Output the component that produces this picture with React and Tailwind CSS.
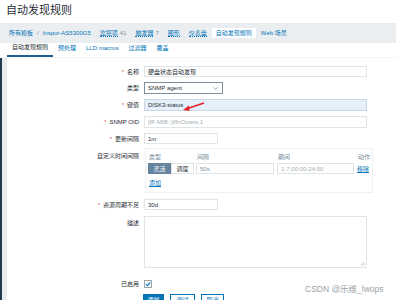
import { ChevronDown } from "lucide-react";

const crumbs = [
  { text: "监控项", num: "41" },
  { text: "触发器", num: "7" },
  { text: "图形" },
  { text: "仪表盘" },
];

function Label({ req, children, className = "" }) {
  return (
    <div className={`w-[132px] shrink-0 text-right text-[6px] leading-none text-[#1f2c33] ${className}`}>
      {req && <span className="mr-[3px] text-[#e45959]">*</span>}
      {children}
    </div>
  );
}

function Field({ className = "", children }) {
  return (
    <div className={`flex items-center border border-[#dfe4e7] bg-white px-[3px] text-[6px] leading-none text-[#1f2c33] ${className}`}>
      {children}
    </div>
  );
}

export default function App() {
  return (
    <div className="relative h-[300px] w-[396px] overflow-hidden bg-white font-['Liberation_Sans','Noto_Sans_CJK_SC',sans-serif]">
      {/* Title */}
      <div className="h-[23px] pl-[6px] pt-[5px] text-[11px] leading-none text-[#1f2c33]">
        自动发现规则
      </div>

      {/* Breadcrumbs */}
      <div className="flex h-[20px] items-center bg-[#ebeef0] pl-[9px] text-[6px] leading-none">
        <span className="text-[#0275b8]">所有模板</span>
        <span className="mx-[4px] text-[#768d99]">/</span>
        <span className="text-[#0275b8]">Inspur-AS5300G5</span>
        {crumbs.map((c) => (
          <span key={c.text} className="ml-[9px] text-[#0275b8]">
            <span className="border-b border-dotted border-[#0275b8]">{c.text}</span>
            {c.num && <span className="ml-[2px] text-[#768d99]">{c.num}</span>}
          </span>
        ))}
        <span className="ml-[5px] bg-white px-[4px] py-[2px] text-[#0275b8]">自动发现规则</span>
        <span className="ml-[5px] text-[#0275b8]">Web 场景</span>
      </div>

      {/* Tabs */}
      <div className="flex h-[15px] items-end border-b border-[#f2f4f5] pl-[7px] text-[6px] leading-none">
        <div className="border-b-2 border-[#1f5f8f] px-[5px] pb-[5px] text-[#1f2c33]">自动发现规则</div>
        <div className="ml-[5px] pb-[6px] text-[#0275b8]">预处理</div>
        <div className="ml-[10px] pb-[6px] text-[#0275b8]">LLD macros</div>
        <div className="ml-[10px] pb-[6px] text-[#0275b8]">过滤器</div>
        <div className="ml-[10px] pb-[6px] text-[#0275b8]">覆盖</div>
      </div>

      {/* Form */}
      <div className="flex h-[242px]">
        <div className="w-[2px] bg-[#1e3a4c]" />
        <div className="w-[5px] bg-[#e8ebed]" />
        <div className="flex flex-1 flex-col pt-[8px]">
          <div className="flex items-center gap-[5px]">
            <Label req>名称</Label>
            <Field className="h-[11px] w-[223px]">硬盘状态自动发现</Field>
          </div>

          <div className="mt-[5px] flex items-center gap-[5px]">
            <Label>类型</Label>
            <div className="flex h-[12px] w-[79px] items-center justify-between border border-[#7b8fa0] bg-white px-[3px] text-[6px] leading-none text-[#1f2c33]">
              SNMP agent
              <ChevronDown size={7} strokeWidth={1.5} className="text-[#1f2c33]" />
            </div>
          </div>

          <div className="mt-[5px] flex items-center gap-[5px]">
            <Label req>键值</Label>
            <div className="flex h-[12px] w-[223px] items-center border border-[#c9d7e2] bg-[#e6f0fa] px-[3px] text-[6px] leading-none text-[#1f2c33]">
              DISK3-status
            </div>
          </div>

          <div className="mt-[5px] flex items-center gap-[5px]">
            <Label req>SNMP OID</Label>
            <Field className="h-[12px] w-[223px] text-[#a3adb3]">[IF-MIB::]ifInOctets.1</Field>
          </div>

          <div className="mt-[5px] flex items-center gap-[5px]">
            <Label req>更新间隔</Label>
            <Field className="h-[11px] w-[74px]">1m</Field>
          </div>

          <div className="mt-[4px] flex items-start gap-[6px]">
            <Label className="mt-[5px]">自定义时间间隔</Label>
            <div className="flex h-[45px] w-[228px] flex-col border border-[#eef0f1] pl-[2px] pt-[5px] text-[6px] leading-none">
              <div className="grid grid-cols-[48px_81px_80px_1fr] pl-[1px] text-[#768d99]">
                <span>类型</span>
                <span>间隔</span>
                <span>期间</span>
                <span>动作</span>
              </div>
              <div className="mt-[3px] grid grid-cols-[48px_81px_80px_1fr] items-center">
                <div className="flex h-[11px]">
                  <div className="flex w-[23px] items-center justify-center bg-[#6684a0] text-white">灵活</div>
                  <div className="flex w-[23px] items-center justify-center border border-[#dfe4e7] text-[#1f2c33]">调度</div>
                </div>
                <Field className="h-[11px] w-[78px] text-[#768d99]">50s</Field>
                <Field className="h-[11px] w-[77px] text-[#a3adb3]">1-7,00:00-24:00</Field>
                <span className="text-[#0275b8] underline">移除</span>
              </div>
              <span className="mt-[6px] self-start pl-[1px] text-[#0275b8] underline">添加</span>
            </div>
          </div>

          <div className="mt-[6px] flex items-center gap-[5px]">
            <Label req>资源周期不足</Label>
            <Field className="h-[11px] w-[74px]">30d</Field>
          </div>

          <div className="mt-[6px] flex items-start gap-[5px]">
            <Label className="mt-[4px]">描述</Label>
            <div className="relative h-[52px] w-[223px] border border-[#dfe4e7]">
              <svg className="absolute bottom-[1px] right-[1px]" width="5" height="5" viewBox="0 0 5 5">
                <path d="M4.5 1 L1 4.5 M4.5 3 L3 4.5" stroke="#9aa5ab" strokeWidth="0.7" />
              </svg>
            </div>
          </div>

          <div className="mt-[12px] flex items-center gap-[5px]">
            <Label>已启用</Label>
            <div className="flex h-[8px] w-[8px] items-center justify-center border border-[#9aa5ab] bg-white">
              <svg width="6" height="6" viewBox="0 0 6 6">
                <path d="M0.8 3.2 L2.4 4.6 L5.2 1.3" fill="none" stroke="#0275b8" strokeWidth="1.1" />
              </svg>
            </div>
          </div>

          <div className="mt-[6px] flex items-start gap-[5px]">
            <div className="w-[131px] shrink-0" />
            <div className="flex gap-[6px] text-[6px] leading-none">
              <div className="flex h-[12px] w-[21px] items-start justify-center border border-[#0275b8] bg-[#0275b8] pt-[2px] text-white">添加</div>
              <div className="flex h-[12px] w-[25px] items-start justify-center border border-[#0275b8] bg-white pt-[2px] text-[#0275b8]">测试</div>
              <div className="flex h-[12px] w-[23px] items-start justify-center border border-[#0275b8] bg-white pt-[2px] text-[#0275b8]">取消</div>
            </div>
          </div>
        </div>
      </div>

      {/* Red annotation arrow */}
      <svg className="absolute left-[180px] top-[100px]" width="28" height="14" viewBox="0 0 28 14">
        <path d="M24 3 L6 9" stroke="#e8202a" strokeWidth="1.4" />
        <path d="M3 10 L9 5.5 L9.5 11 Z" fill="#e8202a" />
      </svg>

      {/* Watermark */}
      <div className="absolute left-[305px] top-[285px] text-[8.5px] leading-none text-[#9ba3a8]">
        CSDN @乐维_lwops
      </div>
    </div>
  );
}
